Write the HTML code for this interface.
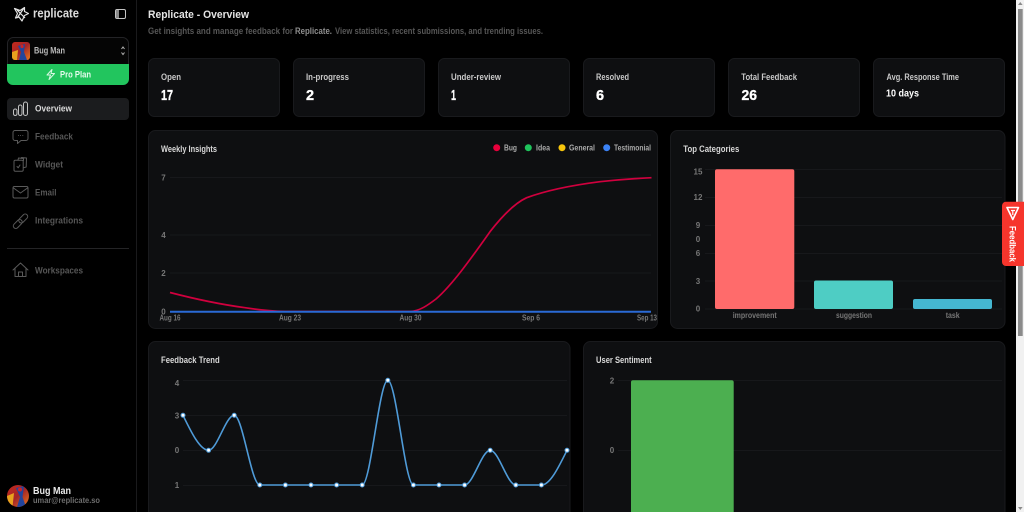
<!DOCTYPE html>
<html lang="en">
<head>
<meta charset="utf-8">
<title>Replicate - Overview</title>
<style>
html,body{margin:0;padding:0;width:1024px;height:512px;overflow:hidden;background:#000}
svg{position:absolute;left:0;top:0;display:block;filter:blur(.3px)}
text{font-family:"Liberation Sans",sans-serif}
.nav{font-size:9.5px;font-weight:700;fill:#565656}
.lab{font-size:9.5px;font-weight:700;fill:#c8c8c8}
.val{font-size:14.5px;font-weight:700;fill:#fff;stroke:#fff;stroke-width:.35px}
.ttl{font-size:9.5px;font-weight:700;fill:#d8d8d8}
.tk{font-size:8px;font-weight:700;fill:#777}
.leg{font-size:8.5px;font-weight:700;fill:#aaa}
.card{fill:#0e0f11;stroke:#191a1d;stroke-width:1}
.grid{stroke:#17181b;stroke-width:1;fill:none}
.ic{fill:none;stroke:#5a5a5a;stroke-width:1;stroke-linejoin:round;stroke-linecap:round}
</style>
</head>
<body>
<svg width="1024" height="512" viewBox="0 0 1024 512" xmlns="http://www.w3.org/2000/svg">
<defs>
<linearGradient id="av" x1="0" y1="0" x2="1" y2="1"><stop offset="0" stop-color="#c42a1c"/><stop offset=".5" stop-color="#a32428"/><stop offset="1" stop-color="#ea7a1c"/></linearGradient>
<clipPath id="c1"><rect x="12" y="42" width="18" height="18" rx="3"/></clipPath>
<clipPath id="c2"><circle cx="18" cy="496" r="11"/></clipPath>
</defs>
<rect width="1024" height="512" fill="#000"/>

<!-- sidebar -->
<line x1="136.5" y1="0" x2="136.5" y2="512" stroke="#1a1a1c"/>
<path d="M14.5 8.5 L20 10.5 L24.5 7.5 L24.5 11.5 L28.5 13.5 L24.5 15.5 L22 21 L19 17 L15.5 18 L17.5 13.5 Z M17 10 L25 18 M24 8 L17 18" fill="none" stroke="#e2e2e2" stroke-width="1.2" stroke-linejoin="round"/>
<text x="33" y="17.5" font-size="13" font-weight="700" fill="#dcdcdc" textLength="46" lengthAdjust="spacingAndGlyphs">replicate</text>
<rect x="115.5" y="9.5" width="10" height="9" rx="1.5" fill="none" stroke="#c4c4c4"/>
<rect x="116" y="10" width="3" height="8" fill="#8a8a8a"/>

<rect x="7.5" y="37.5" width="121" height="40" rx="6" fill="#050505" stroke="#232326"/>
<path d="M7 64 H129 V79 a6 6 0 0 1 -6 6 H13 a6 6 0 0 1 -6 -6 Z" fill="#22c55e"/>
<g clip-path="url(#c1)">
<rect x="12" y="42" width="18" height="18" fill="url(#av)"/>
<path d="M18 46 L25 44 L24 52 L27 60 H19 L21 52 Z" fill="#23459c"/>
<path d="M12 52 L18 50 L17 60 H12 Z" fill="#e8a21e"/>
<circle cx="22" cy="46.5" r="1.6" fill="#c9252a"/>
</g>
<text x="34" y="53.5" font-size="9" font-weight="700" fill="#bdbdbd" textLength="31" lengthAdjust="spacingAndGlyphs">Bug Man</text>
<path d="M121.5 49 L123 47 L124.5 49 M121.5 52.5 L123 54.5 L124.5 52.5" fill="none" stroke="#b5b5b5" stroke-width="1"/>
<path d="M52 69.5 L47 75 H50.5 L49 79.5 L54.5 73.5 H51 Z" fill="none" stroke="#d8f8e2" stroke-width="1" stroke-linejoin="round"/>
<text x="60" y="77.5" font-size="9.5" font-weight="700" fill="#e6fbee" textLength="31" lengthAdjust="spacingAndGlyphs">Pro Plan</text>

<rect x="7" y="98" width="122" height="22" rx="4" fill="#1b1c1e"/>
<g fill="none" stroke="#c2c2c2" stroke-width="1">
<rect x="13.5" y="109" width="3.5" height="6.5" rx="1.7"/>
<rect x="18.5" y="105" width="3.5" height="10.5" rx="1.7"/>
<rect x="23.5" y="102" width="4" height="13.5" rx="2"/>
</g>
<text x="35" y="111.5" class="nav" style="fill:#dadada" textLength="37" lengthAdjust="spacingAndGlyphs">Overview</text>

<path class="ic" d="M15 130.5 H26 a2 2 0 0 1 2 2 V138.5 a2 2 0 0 1 -2 2 H21 L17.5 143.5 V140.5 H15 a2 2 0 0 1 -2 -2 V132.5 a2 2 0 0 1 2 -2 Z"/>
<path d="M18 135.5 h.8 M20.2 135.5 h.8 M22.4 135.5 h.8" stroke="#5a5a5a" stroke-width="1" fill="none"/>
<text x="35" y="139.5" class="nav" textLength="38" lengthAdjust="spacingAndGlyphs">Feedback</text>

<path class="ic" d="M14 161.5 a1.2 1.2 0 0 1 1.2 -1.2 H22 a1.2 1.2 0 0 1 1.2 1.2 V170 a1.2 1.2 0 0 1 -1.2 1.2 H15.2 a1.2 1.2 0 0 1 -1.2 -1.2 Z M18 160 L18.5 158 L23.5 158.5 L23.5 160.5 M21 158.3 L21.5 157.5 L26.5 158 L26.2 167 L23.2 167.8"/>
<path class="ic" d="M17 166.5 L18.2 167.8 L20 165"/>
<text x="35" y="167.5" class="nav" textLength="28" lengthAdjust="spacingAndGlyphs">Widget</text>

<rect class="ic" x="13" y="186.5" width="15" height="11.5" rx="1.5"/>
<path class="ic" d="M13.5 188 L20.5 193 L27.5 188"/>
<text x="35" y="195.5" class="nav" textLength="21.5" lengthAdjust="spacingAndGlyphs">Email</text>

<g class="ic">
<rect x="12.5" y="221.5" width="10.5" height="5" rx="2.5" transform="rotate(-45 17.75 224)"/>
<rect x="18" y="216" width="10.5" height="5" rx="2.5" transform="rotate(-45 23.25 218.5)"/>
</g>
<text x="35" y="223.5" class="nav" textLength="48" lengthAdjust="spacingAndGlyphs">Integrations</text>

<line x1="7" y1="248.5" x2="129" y2="248.5" stroke="#242426"/>

<path class="ic" d="M13 270 L20.5 263 L28 270 M15 268.5 V276.5 H26 V268.5 M18.5 276.5 V272 H22.5 V276.5"/>
<text x="35" y="273.5" class="nav" textLength="48" lengthAdjust="spacingAndGlyphs">Workspaces</text>

<g clip-path="url(#c2)">
<rect x="7" y="485" width="22" height="22" fill="url(#av)"/>
<path d="M16 488 L24 486 L22.5 497 L26 507 H17 L20 497 Z" fill="#23459c"/>
<path d="M7 496 L14 493 L12.5 507 H7 Z" fill="#e8a21e"/>
<circle cx="20" cy="489.5" r="2" fill="#c9252a"/>
</g>
<text x="33" y="494" font-size="10" font-weight="700" fill="#eaeaea" textLength="38" lengthAdjust="spacingAndGlyphs">Bug Man</text>
<text x="33" y="503" font-size="8.5" font-weight="700" fill="#6e6e6e" textLength="67" lengthAdjust="spacingAndGlyphs">umar@replicate.so</text>

<!-- header -->
<text x="148" y="18" font-size="11" font-weight="700" fill="#e4e4e4" textLength="101" lengthAdjust="spacingAndGlyphs">Replicate - Overview</text>
<text x="148" y="34" font-size="9" font-weight="700" fill="#565656" textLength="145" lengthAdjust="spacingAndGlyphs">Get insights and manage feedback for</text>
<text x="295" y="34" font-size="9" font-weight="700" fill="#8e8e8e" textLength="37" lengthAdjust="spacingAndGlyphs">Replicate.</text>
<text x="335" y="34" font-size="9" font-weight="700" fill="#565656" textLength="208" lengthAdjust="spacingAndGlyphs">View statistics, recent submissions, and trending issues.</text>

<!-- stat cards -->
<rect class="card" x="148.5" y="58.5" width="131" height="58" rx="6"/>
<rect class="card" x="293.5" y="58.5" width="131" height="58" rx="6"/>
<rect class="card" x="438.5" y="58.5" width="131" height="58" rx="6"/>
<rect class="card" x="583.5" y="58.5" width="131" height="58" rx="6"/>
<rect class="card" x="728.5" y="58.5" width="131" height="58" rx="6"/>
<rect class="card" x="873.5" y="58.5" width="131" height="58" rx="6"/>
<text class="lab" x="161" y="80" textLength="20" lengthAdjust="spacingAndGlyphs">Open</text>
<text class="lab" x="306" y="80" textLength="43" lengthAdjust="spacingAndGlyphs">In-progress</text>
<text class="lab" x="451" y="80" textLength="50" lengthAdjust="spacingAndGlyphs">Under-review</text>
<text class="lab" x="596" y="80" textLength="33" lengthAdjust="spacingAndGlyphs">Resolved</text>
<text class="lab" x="741.3" y="80" textLength="55.7" lengthAdjust="spacingAndGlyphs">Total Feedback</text>
<text class="lab" x="886.5" y="80" textLength="72.5" lengthAdjust="spacingAndGlyphs">Avg. Response Time</text>
<text class="val" x="161" y="100" textLength="12" lengthAdjust="spacingAndGlyphs">17</text>
<text class="val" x="306" y="100">2</text>
<text class="val" x="451" y="100" textLength="5" lengthAdjust="spacingAndGlyphs">1</text>
<text class="val" x="596" y="100">6</text>
<text class="val" x="741.5" y="100" textLength="15.5" lengthAdjust="spacingAndGlyphs">26</text>
<text x="886" y="96.5" font-size="10.5" font-weight="700" fill="#fff" textLength="33" lengthAdjust="spacingAndGlyphs">10 days</text>

<!-- weekly insights -->
<rect class="card" x="148.5" y="130.5" width="509" height="198" rx="7"/>
<text class="ttl" x="161" y="152" textLength="56" lengthAdjust="spacingAndGlyphs">Weekly Insights</text>
<circle cx="496.7" cy="147.7" r="3.5" fill="#e8003c"/><text class="leg" x="504" y="150.5" textLength="13" lengthAdjust="spacingAndGlyphs">Bug</text>
<circle cx="528.3" cy="147.7" r="3.5" fill="#1fc45c"/><text class="leg" x="536" y="150.5" textLength="14" lengthAdjust="spacingAndGlyphs">Idea</text>
<circle cx="562" cy="147.7" r="3.5" fill="#f7c50c"/><text class="leg" x="569" y="150.5" textLength="26" lengthAdjust="spacingAndGlyphs">General</text>
<circle cx="606.7" cy="147.7" r="3.5" fill="#3b82f6"/><text class="leg" x="614" y="150.5" textLength="37" lengthAdjust="spacingAndGlyphs">Testimonial</text>
<path class="grid" d="M170 177.5 H651 M170 235 H651 M170 273 H651"/>
<g text-anchor="middle">
<text class="tk" x="163.5" y="180.5">7</text>
<text class="tk" x="163.5" y="238">4</text>
<text class="tk" x="163.5" y="276">2</text>
<text class="tk" x="163.5" y="314.5">0</text>
</g>
<text class="tk" x="159.5" y="320.5" textLength="21" lengthAdjust="spacingAndGlyphs">Aug 16</text>
<text class="tk" x="279" y="320.5" textLength="22" lengthAdjust="spacingAndGlyphs">Aug 23</text>
<text class="tk" x="399.5" y="320.5" textLength="22" lengthAdjust="spacingAndGlyphs">Aug 30</text>
<text class="tk" x="522" y="320.5" textLength="18" lengthAdjust="spacingAndGlyphs">Sep 6</text>
<text class="tk" x="637" y="320.5" textLength="20" lengthAdjust="spacingAndGlyphs">Sep 13</text>
<path d="M170 292.5 C195 299 225 305 245 307.7 C258 309.7 268 311 285 311.5 L410 311.5 C420 311 428 305 436 299 C452 285 470 260 490 231.7 C503 215 515 203 526.7 197.7 C545 191 570 185.5 600 181.7 C620 179.5 635 178.5 651.5 177.7" fill="none" stroke="#d0003e" stroke-width="1.7"/>
<line x1="170" y1="311.7" x2="651" y2="311.7" stroke="#2a6ad6" stroke-width="2"/>

<!-- top categories -->
<rect class="card" x="670.5" y="130.5" width="334.5" height="198" rx="7"/>
<text class="ttl" x="683.3" y="152" textLength="56" lengthAdjust="spacingAndGlyphs">Top Categories</text>
<path class="grid" d="M705 169.5 H1002 M705 197.5 H1002 M705 225.5 H1002 M705 253.5 H1002 M705 281 H1002 M705 309 H1002"/>
<g text-anchor="middle">
<text class="tk" x="698" y="174.5">15</text>
<text class="tk" x="698" y="200">12</text>
<text class="tk" x="698" y="228">9</text>
<text class="tk" x="698" y="242">0</text>
<text class="tk" x="698" y="256">6</text>
<text class="tk" x="698" y="284">3</text>
<text class="tk" x="698" y="311.5">0</text>
</g>
<rect x="715" y="169.3" width="79.3" height="139.7" rx="2" fill="#ff6b6b"/>
<rect x="814" y="280.5" width="79" height="28.5" rx="2" fill="#4ecdc4"/>
<rect x="913" y="299" width="79" height="10" rx="2" fill="#45b7d1"/>
<text class="tk" x="732.7" y="318" textLength="44" lengthAdjust="spacingAndGlyphs">improvement</text>
<text class="tk" x="836" y="318" textLength="36" lengthAdjust="spacingAndGlyphs">suggestion</text>
<text class="tk" x="945.7" y="318" textLength="14" lengthAdjust="spacingAndGlyphs">task</text>

<!-- feedback trend -->
<rect class="card" x="148.5" y="341.5" width="421.5" height="190" rx="7"/>
<text class="ttl" x="161" y="363" textLength="58.7" lengthAdjust="spacingAndGlyphs">Feedback Trend</text>
<path class="grid" d="M183 380.5 H567 M183 415.5 H567 M183 450.5 H567 M183 485.5 H567"/>
<g text-anchor="middle">
<text class="tk" x="177" y="386">4</text>
<text class="tk" x="177" y="418.5">3</text>
<text class="tk" x="177" y="453">0</text>
<text class="tk" x="177" y="488">1</text>
</g>
<path d="M183 415.3 C191.5 432.8 200.1 450.3 208.6 450.3 C217.1 450.3 225.7 415.3 234.2 415.3 C242.7 415.3 251.3 485 259.8 485 L362.2 485 C370.7 485 379.3 380.3 387.8 380.3 C396.3 380.3 404.9 485 413.4 485 L464.6 485 C473.1 485 481.7 450.3 490.2 450.3 C498.7 450.3 507.3 485 515.8 485 L541.4 485 C549.9 485 558.5 467.6 567 450.3" fill="none" stroke="#4f9bd8" stroke-width="1.6"/>
<g fill="#fff" stroke="#4f9bd8" stroke-width="1">
<circle cx="183" cy="415.3" r="2"/><circle cx="208.6" cy="450.3" r="2"/><circle cx="234.2" cy="415.3" r="2"/><circle cx="259.8" cy="485" r="2"/><circle cx="285.4" cy="485" r="2"/><circle cx="311" cy="485" r="2"/><circle cx="336.6" cy="485" r="2"/><circle cx="362.2" cy="485" r="2"/><circle cx="387.8" cy="380.3" r="2"/><circle cx="413.4" cy="485" r="2"/><circle cx="439" cy="485" r="2"/><circle cx="464.6" cy="485" r="2"/><circle cx="490.2" cy="450.3" r="2"/><circle cx="515.8" cy="485" r="2"/><circle cx="541.4" cy="485" r="2"/><circle cx="567" cy="450.3" r="2"/>
</g>

<!-- user sentiment -->
<rect class="card" x="583.5" y="341.5" width="421.5" height="190" rx="7"/>
<text class="ttl" x="596" y="363" textLength="55.7" lengthAdjust="spacingAndGlyphs">User Sentiment</text>
<path class="grid" d="M618 380.5 H1002 M618 450.5 H1002"/>
<g text-anchor="middle">
<text class="tk" x="612" y="383.5">2</text>
<text class="tk" x="612" y="453">0</text>
</g>
<path d="M631 520 V382.3 a2 2 0 0 1 2 -2 H731.7 a2 2 0 0 1 2 2 V520 Z" fill="#4caf50"/>

<!-- scrollbar -->
<rect x="1016" y="0" width="8" height="512" fill="#f1f1f1"/>
<rect x="1018" y="9" width="4.7" height="327" fill="#8b8b8b"/>
<path d="M1018 5 L1020.3 2 L1022.6 5 Z" fill="#8b8b8b"/>
<path d="M1018 507 L1020.3 510 L1022.6 507 Z" fill="#8b8b8b"/>

<!-- feedback tab -->
<path d="M1024 201.7 H1006 a4 4 0 0 0 -4 4 V262 a4 4 0 0 0 4 4 H1024 Z" fill="#f6352c"/>
<path d="M1007 207.5 H1018.5 L1012.8 219.5 Z" fill="none" stroke="#fff" stroke-width="1.6" stroke-linejoin="round"/>
<path d="M1011 210.5 H1015 M1012.8 210.5 V215" stroke="#fff" stroke-width="1.2" fill="none"/>
<text transform="translate(1009.5 226) rotate(90)" font-size="9.5" font-weight="700" fill="#fff" textLength="36" lengthAdjust="spacingAndGlyphs">Feedback</text>
</svg>
</body>
</html>
